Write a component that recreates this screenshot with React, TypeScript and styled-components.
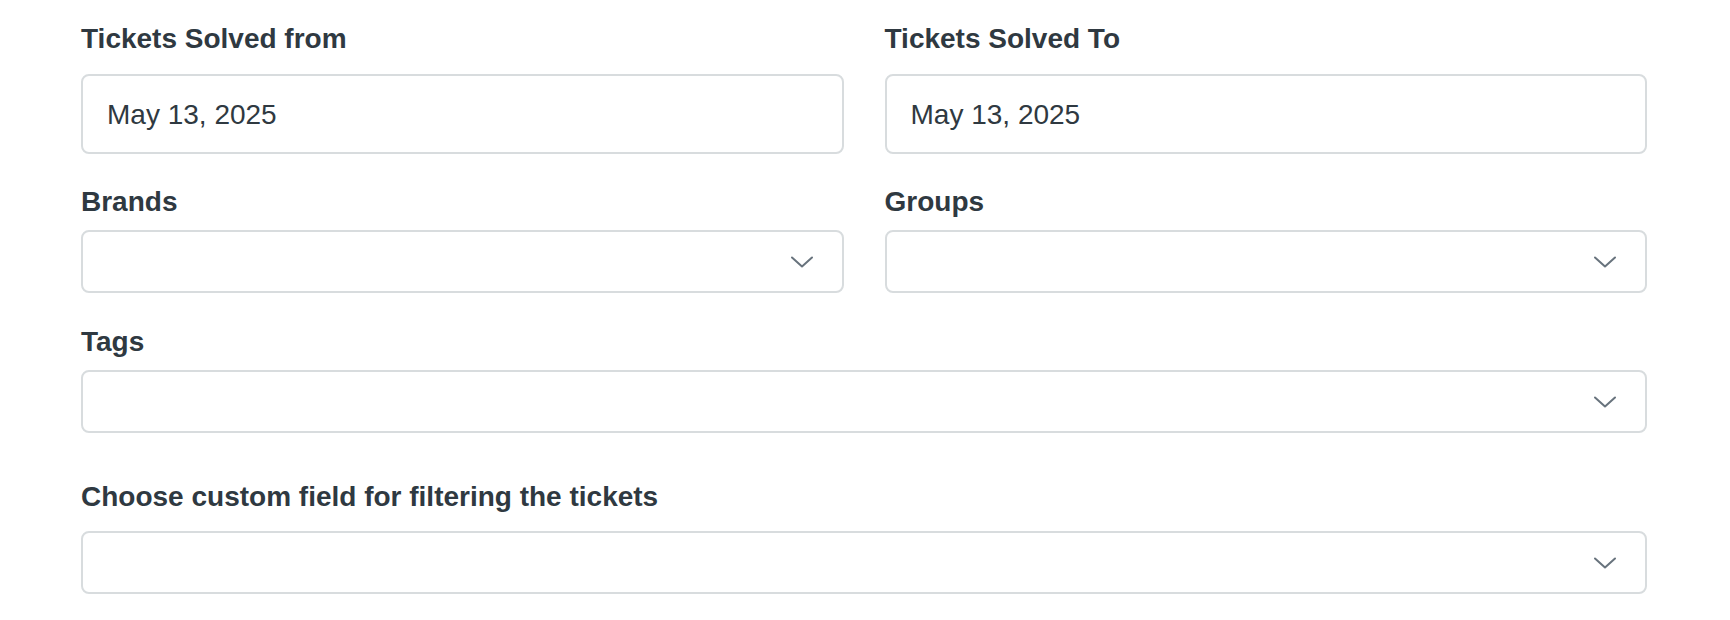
import React from 'react';
import styled, { createGlobalStyle } from 'styled-components';

const GlobalStyle = createGlobalStyle`
  html, body {
    margin: 0;
    padding: 0;
    background: #ffffff;
  }
  * {
    box-sizing: border-box;
  }
`;

const Page = styled.div`
  padding: 19px 83px 0 81px;
  font-family: "Liberation Sans", Arial, sans-serif;
  color: #2f3941;
`;

const Row = styled.div<{ $top?: number }>`
  display: grid;
  grid-template-columns: 1fr 1fr;
  column-gap: 41px;
  margin-top: ${({ $top }) => $top ?? 0}px;
`;

const Field = styled.div<{ $top?: number }>`
  display: flex;
  flex-direction: column;
  margin-top: ${({ $top }) => $top ?? 0}px;
`;

const Label = styled.label<{ $gap: number }>`
  display: block;
  font-size: 28px;
  line-height: 40px;
  font-weight: 700;
  color: #2f3941;
  margin-bottom: ${({ $gap }) => $gap}px;
`;

const TextInput = styled.div`
  height: 80px;
  border: 2px solid #d8dcde;
  border-radius: 8px;
  background: #ffffff;
  display: flex;
  align-items: center;
  padding: 1px 24px 0;
  font-size: 28px;
  line-height: 40px;
  color: #2f3941;
`;

const Select = styled.div`
  height: 63px;
  border: 2px solid #d8dcde;
  border-radius: 8px;
  background: #ffffff;
  display: flex;
  align-items: center;
  justify-content: flex-end;
  padding-right: 29px;
`;

const Chevron = () => (
  <svg width="22" height="12" viewBox="0 0 22 12" fill="none">
    <path
      d="M1 1.5L11 10.5L21 1.5"
      stroke="#68737d"
      strokeWidth="2"
      strokeLinecap="round"
      strokeLinejoin="round"
    />
  </svg>
);

const DropdownField: React.FC<{ label: string; top?: number; gap?: number }> = ({
  label,
  top,
  gap = 8,
}) => (
  <Field $top={top}>
    <Label $gap={gap}>{label}</Label>
    <Select>
      <Chevron />
    </Select>
  </Field>
);

export default function App() {
  return (
    <>
      <GlobalStyle />
      <Page>
        <Row>
          <Field>
            <Label $gap={15}>Tickets Solved from</Label>
            <TextInput>May 13, 2025</TextInput>
          </Field>
          <Field>
            <Label $gap={15}>Tickets Solved To</Label>
            <TextInput>May 13, 2025</TextInput>
          </Field>
        </Row>
        <Row $top={28}>
          <DropdownField label="Brands" />
          <DropdownField label="Groups" />
        </Row>
        <DropdownField label="Tags" top={29} />
        <DropdownField label="Choose custom field for filtering the tickets" top={44} gap={14} />
      </Page>
    </>
  );
}
